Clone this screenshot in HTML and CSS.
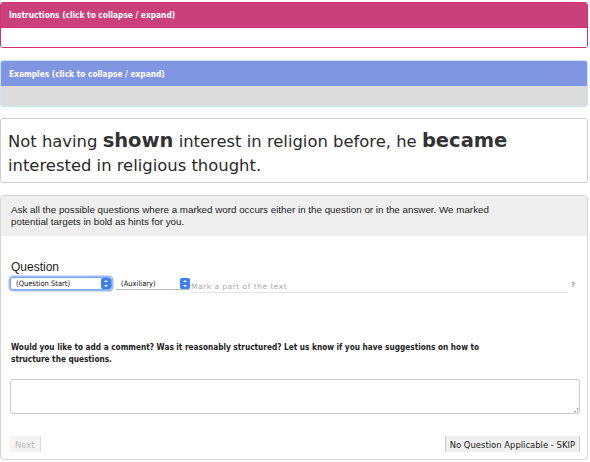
FILE: index.html
```html
<!DOCTYPE html>
<html>
<head>
<meta charset="utf-8">
<link rel="stylesheet" href="styles.css">
</head>
<body>
<div class="page">
  <div class="panel panel-pink">
    <div class="panel-head">Instructions (click to collapse / expand)</div>
    <div class="panel-body"></div>
  </div>
  <div class="panel panel-blue">
    <div class="panel-head">Examples (click to collapse / expand)</div>
    <div class="panel-body"></div>
  </div>
  <div class="sentence">
    Not having <b class="target">shown</b> interest in religion before, he <b class="target">became</b> interested in religious thought.
  </div>
  <div class="task">
    <div class="task-intro"><p>Ask all the possible questions where a marked word occurs either in the question or in the answer. We marked potential targets in bold as hints for you.</p></div>
    <div class="task-main">
      <div class="q-label">Question</div>
      <div class="q-row">
        <div class="select select-focus"><span>(Question Start)</span><span class="arrow"></span></div>
        <div class="select select-plain"><span>(Auxiliary)</span><span class="arrow"></span></div>
        <div class="mark">Mark a part of the text</div>
        <div class="qmark">?</div>
      </div>
      <div class="comment-label">Would you like to add a comment? Was it reasonably structured? Let us know if you have suggestions on how to structure the questions.</div>
      <div class="comment-box"><span class="grip"></span></div>
      <div class="buttons">
        <div class="btn btn-disabled">Next</div>
        <div class="btn">No Question Applicable - SKIP</div>
      </div>
    </div>
  </div>
</div>
</body>
</html>
```
FILE: styles.css
```css
* { box-sizing: border-box; }
html, body { margin: 0; padding: 0; background: #fff; }
.page { width: 588px; padding-top: 2px; font-family: "DejaVu Sans", sans-serif; }
.panel { border: 1px solid; border-radius: 3px; overflow: hidden; }
.panel-head { height: 25px; padding: 0 8px; display: flex; align-items: center; color: #fff; font-family: "DejaVu Sans Condensed", "DejaVu Sans", sans-serif; font-weight: bold; font-size: 8.3px; }
.panel-pink { border-color: #d62f6f; }
.panel-pink .panel-head { background: #c9407b; border-bottom: 1px solid #d62f6f; }
.panel-pink .panel-body { height: 19px; background: #fff; }
.panel-blue { margin-top: 12px; border-color: #c5e7ef; }
.panel-blue .panel-head { background: #8096e2; }
.panel-blue .panel-body { height: 20px; background: #dcdcdc; }
.sentence { margin-top: 11px; border: 1px solid #cfcfcf; border-radius: 3px; height: 65px; padding: 10px 7px 0; font-size: 16.4px; line-height: 24px; color: #2a2a2a; }
.target { font-size: 19.5px; color: #333; }
.task { margin-top: 12px; border: 1px solid #d5d5d5; border-radius: 4px; height: 265px; }
.task-intro { background: #efefef; padding: 8px 10px 0; height: 40px; border-radius: 4px 4px 0 0; }
.task-intro p { margin: 0; max-width: 490px; font-family: "Liberation Sans", Arial, sans-serif; font-size: 9.8px; line-height: 12px; color: #222; }
.task-main { padding: 24px 9px 0; }
.q-label { font-family: "Liberation Sans", Arial, sans-serif; font-size: 12px; color: #222; padding-left: 1px; }
.q-row { display: flex; align-items: flex-start; margin-top: 3px; height: 20px; }
.select { height: 13px; font-family: "DejaVu Sans Condensed", sans-serif; font-size: 7.5px; display: flex; align-items: center; justify-content: space-between; padding-left: 5px; color: #111; }
.select-focus { width: 102px; border: 1px solid #7aa6f2; border-radius: 3px; box-shadow: 0 0 0 1.5px #9cbcf5; }
.select-plain { width: 74px; margin-left: 4px; border-bottom: 1px solid #bbb; }
.arrow { width: 10px; height: 11px; background: #3e7ff0; border-radius: 2px; position: relative; }
.arrow::before, .arrow::after { content: ""; position: absolute; left: 3px; border-left: 2px solid transparent; border-right: 2px solid transparent; }
.arrow::before { top: 2px; border-bottom: 2px solid #fff; }
.arrow::after { bottom: 2px; border-top: 2px solid #fff; }
.mark { flex: 1; height: 16px; border-bottom: 1px solid #e3e3e3; font-size: 7.5px; letter-spacing: 0.5px; color: #aaa; padding-top: 5px; margin-left: 1px; }
.qmark { font-size: 7px; padding-top: 4px; width: 10px; text-align: center; color: #555; }
.comment-label { margin-top: 44px; max-width: 490px; font-family: "DejaVu Sans Condensed", sans-serif; font-weight: bold; font-size: 8.2px; line-height: 12px; color: #222; padding-left: 1px; }
.comment-box { margin-top: 14px; height: 35px; width: 570px; border: 1px solid #ccc; border-radius: 3px; position: relative; }
.grip { position: absolute; right: 1px; bottom: 1px; width: 4px; height: 4px; border-right: 1px dotted #999; border-bottom: 1px dotted #999; }
.buttons { display: flex; justify-content: space-between; margin-top: 22px; width: 570px; }
.btn { height: 16px; padding: 0 4px; font-family: "DejaVu Sans Condensed", sans-serif; font-size: 9.4px; display: flex; align-items: center; background: #f0f0f0; border-right: 1px solid #c8c8c8; border-left: 1px solid #c8c8c8; color: #222; }
.btn-disabled { color: #bbb; background: #f4f4f4; border-left: none; border-right: 1px solid #ddd; padding: 0 5px; }
```
